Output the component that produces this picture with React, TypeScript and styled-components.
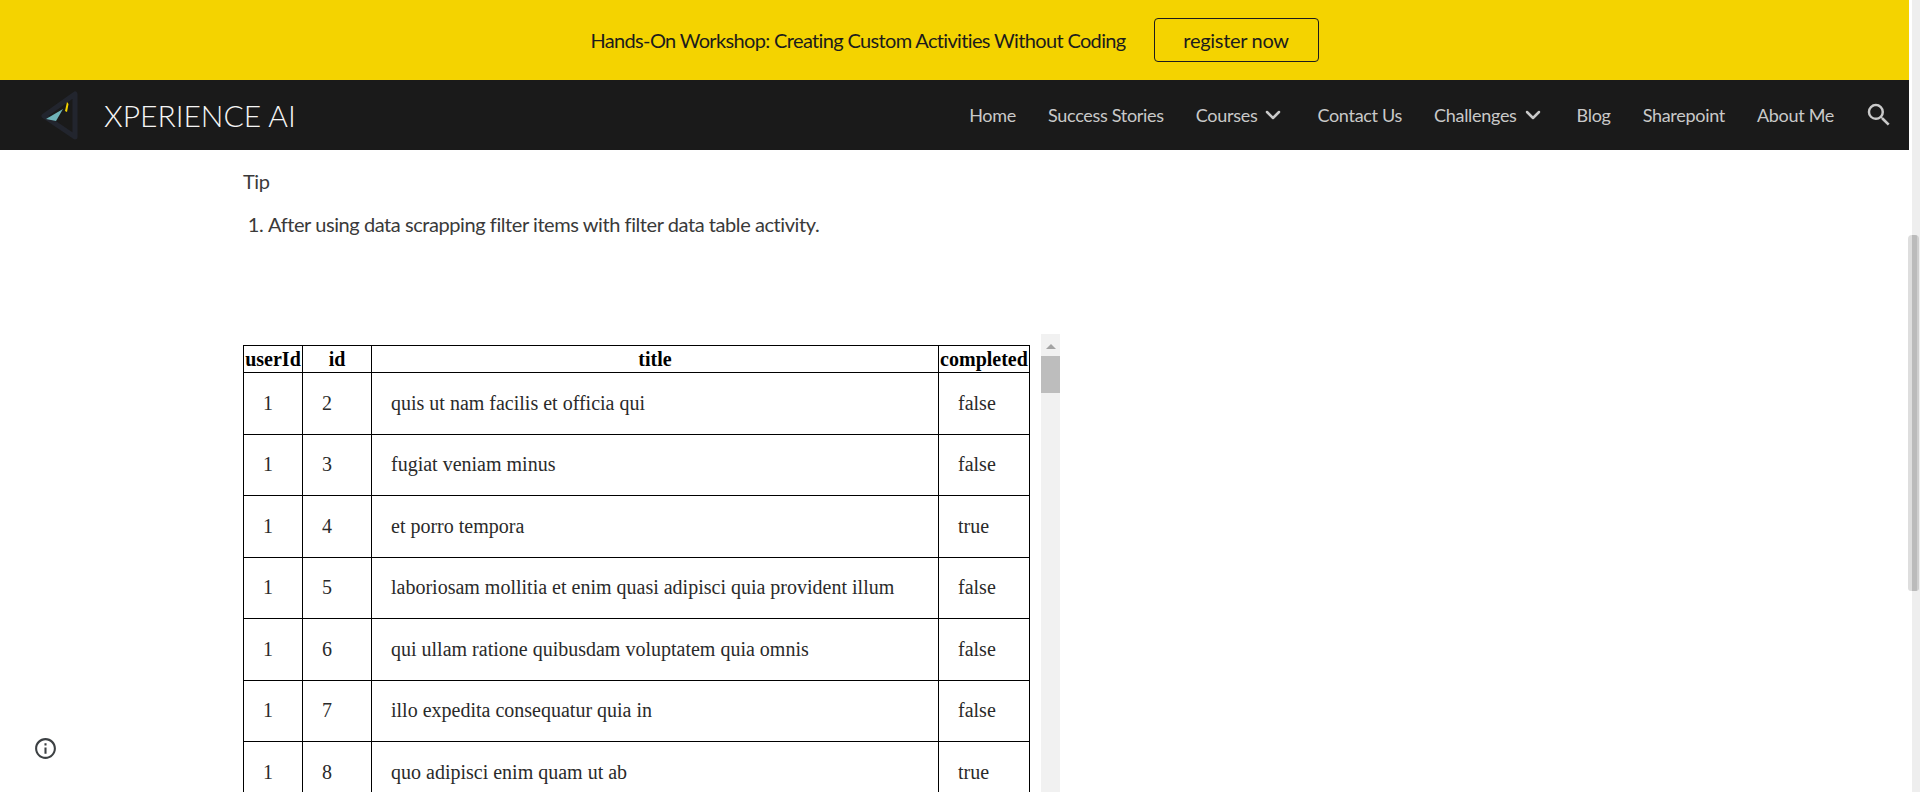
import React from "react";
import styled, { createGlobalStyle } from "styled-components";
import { ChevronDown } from "lucide-react";

const GlobalStyle = createGlobalStyle`
  html, body {
    margin: 0;
    height: 792px;
    overflow: hidden;
    background: #fff;
  }
`;

const Root = styled.div`
  display: flex;
  height: 792px;
  overflow: hidden;
  font-family: "Lato", "Liberation Sans", sans-serif;
`;

const Page = styled.div`
  flex: 1;
  min-width: 0;
  display: flex;
  flex-direction: column;
`;

const PageScrollbar = styled.div`
  flex: none;
  width: 8px;
  margin-left: 3px;
  background: #eeeeee;
  padding-top: 235px;
`;

const PageScrollThumb = styled.div`
  margin-left: -4px;
  width: 11px;
  height: 356px;
  border-radius: 4px 4px 3px 3px;
  background: linear-gradient(to right, #dedede 0 4px, #bbbbbb 4px 9px, #cfcfcf 9px);
`;

const Banner = styled.div`
  height: 80px;
  flex: none;
  background: #f4d300;
  display: flex;
  align-items: center;
  justify-content: center;
  gap: 28px;
  color: #1c1c1c;
  font-size: 20px;
  letter-spacing: -0.65px;
`;

const RegisterButton = styled.a`
  width: 165px;
  height: 44px;
  box-sizing: border-box;
  border: 1px solid #1c1c1c;
  border-radius: 4px;
  display: flex;
  align-items: center;
  justify-content: center;
  letter-spacing: -0.3px;
`;

const NavBar = styled.div`
  height: 70px;
  flex: none;
  background: #1a1a1a;
  display: flex;
  align-items: center;
  padding: 0 15px 0 38px;
`;

const Logo = styled.svg`
  width: 50px;
  height: 50px;
  flex: none;
`;

const Brand = styled.div`
  margin-left: 16px;
  color: #f5f5f5;
  font-size: 30px;
  font-weight: 300;
  flex: 1;
`;

const NavItem = styled.a<{ $gap?: number }>`
  display: flex;
  align-items: center;
  gap: 4px;
  color: #c9c9c9;
  font-size: 18px;
  letter-spacing: -0.3px;
  margin-right: ${(props) => props.$gap ?? 32}px;
`;

const SearchIcon = styled.svg`
  width: 30px;
  height: 30px;
  flex: none;
  fill: #c9c9c9;
`;

const Content = styled.div`
  flex: 1;
  min-height: 0;
  padding: 19px 0 0 243px;
  color: #3a3a3a;
  font-size: 20px;
  letter-spacing: -0.43px;
`;

const TipLabel = styled.p`
  margin: 0;
  line-height: 24px;
`;

const TipList = styled.ol`
  margin: 19px 0 0;
  padding-left: 25px;
  line-height: 24px;
`;

const EmbedFrame = styled.div`
  display: flex;
  margin-top: 98px;
  align-items: flex-start;
  letter-spacing: 0;
`;

const DataTable = styled.table`
  border-collapse: collapse;
  margin-top: 11px;
  font-family: "Liberation Serif", "Times New Roman", serif;
  font-size: 20px;
  color: #2a2a2a;
  table-layout: fixed;
  width: 786px;

  th, td {
    border: 1px solid #000;
    padding: 0;
  }

  th {
    height: 26px;
    color: #000;
    font-weight: 700;
    text-align: center;
  }

  td {
    height: 60.5px;
    padding-left: 19px;
  }
`;

const EmbedScrollbar = styled.div`
  margin-left: 11px;
  width: 19px;
  height: 460px;
  background: #f1f1f1;
  display: flex;
  flex-direction: column;
  align-items: center;
`;

const ScrollArrow = styled.div`
  margin-top: 10px;
  width: 0;
  height: 0;
  border-left: 5px solid transparent;
  border-right: 5px solid transparent;
  border-bottom: 5px solid #a3a3a3;
`;

const ScrollThumb = styled.div`
  margin-top: 7px;
  width: 100%;
  height: 37px;
  background: #bdbdbd;
`;

const InfoBadge = styled.svg`
  position: fixed;
  left: 33px;
  bottom: 31px;
  width: 25px;
  height: 25px;
  fill: #3c4043;
`;

const rows = [
  { id: 2, title: "quis ut nam facilis et officia qui", completed: "false" },
  { id: 3, title: "fugiat veniam minus", completed: "false" },
  { id: 4, title: "et porro tempora", completed: "true" },
  { id: 5, title: "laboriosam mollitia et enim quasi adipisci quia provident illum", completed: "false" },
  { id: 6, title: "qui ullam ratione quibusdam voluptatem quia omnis", completed: "false" },
  { id: 7, title: "illo expedita consequatur quia in", completed: "false" },
  { id: 8, title: "quo adipisci enim quam ut ab", completed: "true" },
];

export default function App() {
  return (
    <Root>
      <GlobalStyle />
      <Page>
        <Banner>
          <span>Hands-On Workshop: Creating Custom Activities Without Coding</span>
          <RegisterButton>register now</RegisterButton>
        </Banner>
        <NavBar>
          <Logo viewBox="0 0 50 50">
            <path d="M37 4 L37 47 L6 26 Z" fill="none" stroke="#22252e" strokeWidth="5" strokeLinejoin="round" />
            <path d="M8 29 L25 19 L18 31 Z" fill="#6fb3b8" />
            <path d="M29 12 L30.5 14 L29 22 L27 21 Z" fill="#f4d300" />
          </Logo>
          <Brand>XPERIENCE AI</Brand>
          <NavItem>Home</NavItem>
          <NavItem>Success Stories</NavItem>
          <NavItem>Courses <ChevronDown size={24} strokeWidth={2.5} /></NavItem>
          <NavItem>Contact Us</NavItem>
          <NavItem>Challenges <ChevronDown size={24} strokeWidth={2.5} /></NavItem>
          <NavItem>Blog</NavItem>
          <NavItem>Sharepoint</NavItem>
          <NavItem $gap={30}>About Me</NavItem>
          <SearchIcon viewBox="0 0 24 24">
            <path d="M15.5 14h-.79l-.28-.27A6.47 6.47 0 0 0 16 9.5 6.5 6.5 0 1 0 9.5 16c1.61 0 3.09-.59 4.23-1.57l.27.28v.79l5 4.99L20.49 19l-4.99-5zm-6 0C7.01 14 5 11.99 5 9.5S7.01 5 9.5 5 14 7.01 14 9.5 11.99 14 9.5 14z" />
          </SearchIcon>
        </NavBar>
        <Content>
          <TipLabel>Tip</TipLabel>
          <TipList>
            <li>After using data scrapping filter items with filter data table activity.</li>
          </TipList>
          <EmbedFrame>
            <DataTable>
              <colgroup>
                <col style={{ width: 59 }} />
                <col style={{ width: 69 }} />
                <col style={{ width: 567 }} />
                <col style={{ width: 91 }} />
              </colgroup>
              <thead>
                <tr>
                  <th>userId</th>
                  <th>id</th>
                  <th>title</th>
                  <th>completed</th>
                </tr>
              </thead>
              <tbody>
                {rows.map((row) => (
                  <tr key={row.id}>
                    <td>1</td>
                    <td>{row.id}</td>
                    <td>{row.title}</td>
                    <td>{row.completed}</td>
                  </tr>
                ))}
              </tbody>
            </DataTable>
            <EmbedScrollbar>
              <ScrollArrow />
              <ScrollThumb />
            </EmbedScrollbar>
          </EmbedFrame>
        </Content>
      </Page>
      <PageScrollbar>
        <PageScrollThumb />
      </PageScrollbar>
      <InfoBadge viewBox="0 0 24 24">
        <path d="M11 7h2v2h-2zm0 4h2v6h-2zm1-9C6.48 2 2 6.48 2 12s4.48 10 10 10 10-4.48 10-10S17.52 2 12 2zm0 18c-4.41 0-8-3.59-8-8s3.59-8 8-8 8 3.59 8 8-3.59 8-8 8z" />
      </InfoBadge>
    </Root>
  );
}
